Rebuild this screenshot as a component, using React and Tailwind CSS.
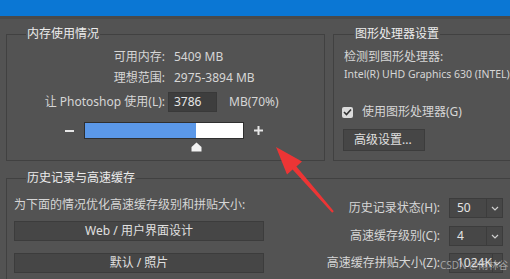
import React from 'react';

const MEMORY = { available: '5409 MB', range: '2975-3894 MB', use: 3786, pct: 70 };
const BAR_W = 160;

function Chevron() {
  return (
    <svg width="8" height="5" viewBox="0 0 8 5">
      <path d="M1 1l3 3 3-3" fill="none" stroke="#cfcfcf" strokeWidth="1.2" />
    </svg>
  );
}

function Select({ value }) {
  return (
    <div className="flex h-[20px] w-[54px] border border-[#3c3c3c] bg-[#474747]">
      <div className="flex-1 pl-[7px] leading-[18px] text-[#e4e4e4]">{value}</div>
      <div className="flex w-[16px] items-center justify-center border-l border-[#3c3c3c]">
        <Chevron />
      </div>
    </div>
  );
}

function Button({ children, className = '' }) {
  return (
    <div className={`flex h-[20px] items-center border border-[#3c3c3c] bg-[#464646] text-[#e0e0e0] ${className}`}>
      {children}
    </div>
  );
}

export default function App() {
  return (
    <div className="relative h-[279px] w-[510px] overflow-hidden bg-[#535353] font-['Noto_Sans','Noto_Sans_CJK_SC',sans-serif] text-[12px] text-[#d6d6d6]">
      <div className="h-[16px] bg-[#0b77d4]" />
      <div className="h-[3px] bg-[#4a4a4a]" />

      <div className="mt-[8px] flex">
        {/* memory */}
        <fieldset className="ml-[6px] h-[134px] w-[319px] shrink-0 border border-[#414141]">
          <legend className="ml-[19px] px-[1px] leading-[14px] text-[#ececec]">内存使用情况</legend>
          <div className="pt-[6px]">
            <div className="flex h-[20px] items-center">
              <span className="w-[158px] text-right">可用内存:</span>
              <span className="ml-[9px]">{MEMORY.available}</span>
            </div>
            <div className="mt-[1px] flex h-[20px] items-center">
              <span className="w-[158px] text-right">理想范围:</span>
              <span className="ml-[9px]">{MEMORY.range}</span>
            </div>
            <div className="mt-[4px] flex h-[20px] items-center">
              <span className="w-[158px] text-right">让 Photoshop 使用(L):</span>
              <div className="ml-[3px] h-[20px] w-[49px] border border-[#393939] bg-[#3e3e3e] pl-[5px] leading-[18px] text-[#e6e6e6]">
                {MEMORY.use}
              </div>
              <span className="ml-[12px]">MB({MEMORY.pct}%)</span>
            </div>

            <div className="mt-[10px] flex h-[17px] items-center">
              <div className="ml-[58px] h-[2px] w-[9px] bg-[#e6e6e6]" />
              <div className="ml-[10px] flex h-[17px] w-[160px] border border-[#2f2f2f] bg-white">
                <div className="h-full bg-[#5b98e8]" style={{ width: `${MEMORY.pct}%` }} />
              </div>
              <svg className="ml-[10px]" width="9" height="9" viewBox="0 0 9 9">
                <path d="M4.5 0v9M0 4.5h9" stroke="#e6e6e6" strokeWidth="2" />
              </svg>
            </div>
            <svg
              className="mt-[3px]"
              style={{ marginLeft: 77 + (BAR_W * MEMORY.pct) / 100 - 5.5 }}
              width="11"
              height="10"
              viewBox="0 0 11 10"
            >
              <path d="M5.5 0.5L10.5 5V9.5H0.5V5Z" fill="#f2f2f2" />
            </svg>
          </div>
        </fieldset>

        {/* gpu */}
        <fieldset className="ml-[8px] h-[134px] w-[200px] shrink-0 border border-[#414141]">
          <legend className="ml-[20px] px-[1px] leading-[14px] text-[#ececec]">图形处理器设置</legend>
          <div className="pl-[10px] pt-[6px]">
            <div className="flex h-[20px] items-center">检测到图形处理器:</div>
            <div className="flex h-[16px] items-center whitespace-nowrap text-[10.5px]">Intel(R) UHD Graphics 630 (INTEL)</div>
            <div className="mt-[19px] flex h-[20px] items-center">
              <div className="-ml-[2px] flex h-[11px] w-[11px] items-center justify-center rounded-[2px] bg-[#dcdcdc]">
                <svg width="9" height="8" viewBox="0 0 9 8">
                  <path d="M1 4l2.5 2.5L8 1.5" fill="none" stroke="#333" strokeWidth="1.6" />
                </svg>
              </div>
              <span className="ml-[9px]">使用图形处理器(G)</span>
            </div>
            <div className="-ml-[1px] mt-[7px] flex h-[22px] w-[82px] items-center border border-[#3c3c3c] bg-[#464646] pl-[10px] text-[#e0e0e0]">
              高级设置...
            </div>
          </div>
        </fieldset>
      </div>

      {/* history & cache */}
      <fieldset className="ml-[6px] mt-[10px] h-[140px] w-[540px] border border-[#414141]">
        <legend className="ml-[19px] px-[1px] leading-[14px] text-[#ececec]">历史记录与高速缓存</legend>
        <div className="flex">
          <div className="w-[257px] pl-[7px] pt-[11px]">
            <div className="flex h-[18px] items-center whitespace-nowrap">为下面的情况优化高速缓存级别和拼贴大小:</div>
            <Button className="mt-[7px] justify-center">Web / 用户界面设计</Button>
            <Button className="mt-[12px] justify-center">默认 / 照片</Button>
          </div>
          <div className="w-[239px] pt-[13px]">
            <div className="flex h-[20px] items-center justify-end gap-[9px]">
              <span>历史记录状态(H):</span>
              <Select value="50" />
            </div>
            <div className="mt-[8px] flex h-[20px] items-center justify-end gap-[9px]">
              <span>高速缓存级别(C):</span>
              <Select value="4" />
            </div>
            <div className="mt-[7px] flex h-[20px] items-center justify-end gap-[9px]">
              <span>高速缓存拼贴大小(Z):</span>
              <Select value="1024K" />
            </div>
          </div>
        </div>
      </fieldset>

      <div className="absolute left-[440px] top-[258px] text-[10px] text-[#c8c8c8]/70">CSDN @雨林谷</div>

      <svg className="pointer-events-none absolute left-0 top-0" width="510" height="279">
        <polygon
          points="276,147 302,161.4 296.4,166.4 333.8,211.3 332.2,212.7 292.6,169.6 287,174.6"
          fill="#ec3535"
        />
      </svg>
    </div>
  );
}
